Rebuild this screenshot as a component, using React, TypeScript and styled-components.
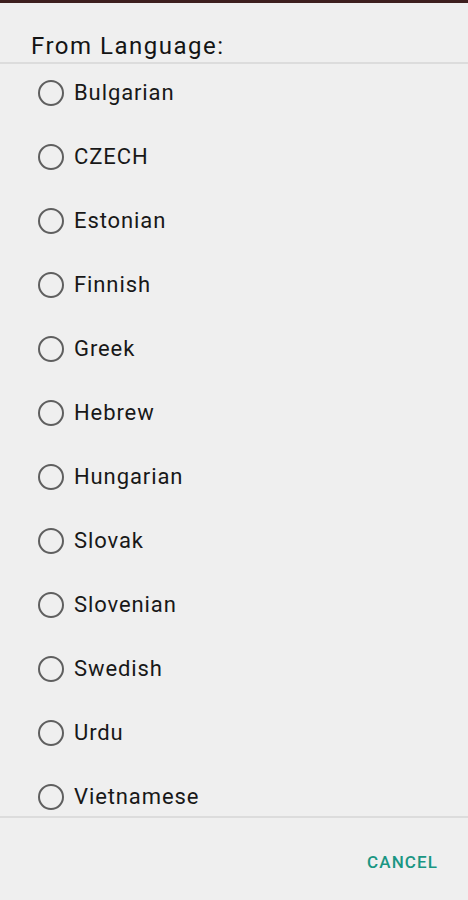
import React from "react";
import styled, { createGlobalStyle } from "styled-components";

const Global = createGlobalStyle`
  html, body { margin: 0; padding: 0; background: #efefef; }
  body { font-family: Roboto, "Noto Sans", sans-serif; }
`;

const Screen = styled.div`
  width: 468px;
  height: 900px;
  display: flex;
  flex-direction: column;
  background: #efefef;
  overflow: hidden;
`;

const TopEdge = styled.div`
  height: 3px;
  background: #3d1f1e;
  flex: none;
`;

const Title = styled.div`
  height: 61px;
  flex: none;
  box-sizing: border-box;
  padding: 29px 0 0 31px;
  font-size: 24px;
  letter-spacing: 1.5px;
  color: #141414;
  line-height: 28px;
  border-bottom: 2px solid #dcdcdc;
`;

const List = styled.div`
  flex: none;
  height: 752px;
  overflow: hidden;
`;

const ListInner = styled.div`
  margin-top: -3px;
  display: flex;
  flex-direction: column;
`;

const Row = styled.div`
  height: 64px;
  display: flex;
  align-items: center;
  padding-left: 38px;
  gap: 10px;
`;

const Radio = styled.span`
  width: 26px;
  height: 26px;
  box-sizing: border-box;
  border-radius: 50%;
  border: 2px solid #5f5f5f;
  flex: none;
`;

const Label = styled.span`
  font-size: 22px;
  letter-spacing: 0.9px;
  color: #181818;
  line-height: 26px;
`;

const Footer = styled.div`
  flex: 1;
  border-top: 2px solid #dcdcdc;
  display: flex;
  justify-content: flex-end;
  align-items: flex-start;
  padding: 32px 30px 0 0;
`;

const Button = styled.button`
  background: none;
  border: none;
  padding: 0;
  font-family: Roboto, sans-serif;
  font-weight: 500;
  font-size: 17px;
  letter-spacing: 1.1px;
  color: #1a9683;
  line-height: 24px;
`;

const languages = [
  "Bulgarian",
  "CZECH",
  "Estonian",
  "Finnish",
  "Greek",
  "Hebrew",
  "Hungarian",
  "Slovak",
  "Slovenian",
  "Swedish",
  "Urdu",
  "Vietnamese",
];

export default function App() {
  return (
    <Screen>
      <Global />
      <TopEdge />
      <Title>From Language:</Title>
      <List>
        <ListInner>
          {languages.map((l) => (
            <Row key={l}>
              <Radio />
              <Label>{l}</Label>
            </Row>
          ))}
        </ListInner>
      </List>
      <Footer>
        <Button>CANCEL</Button>
      </Footer>
    </Screen>
  );
}
